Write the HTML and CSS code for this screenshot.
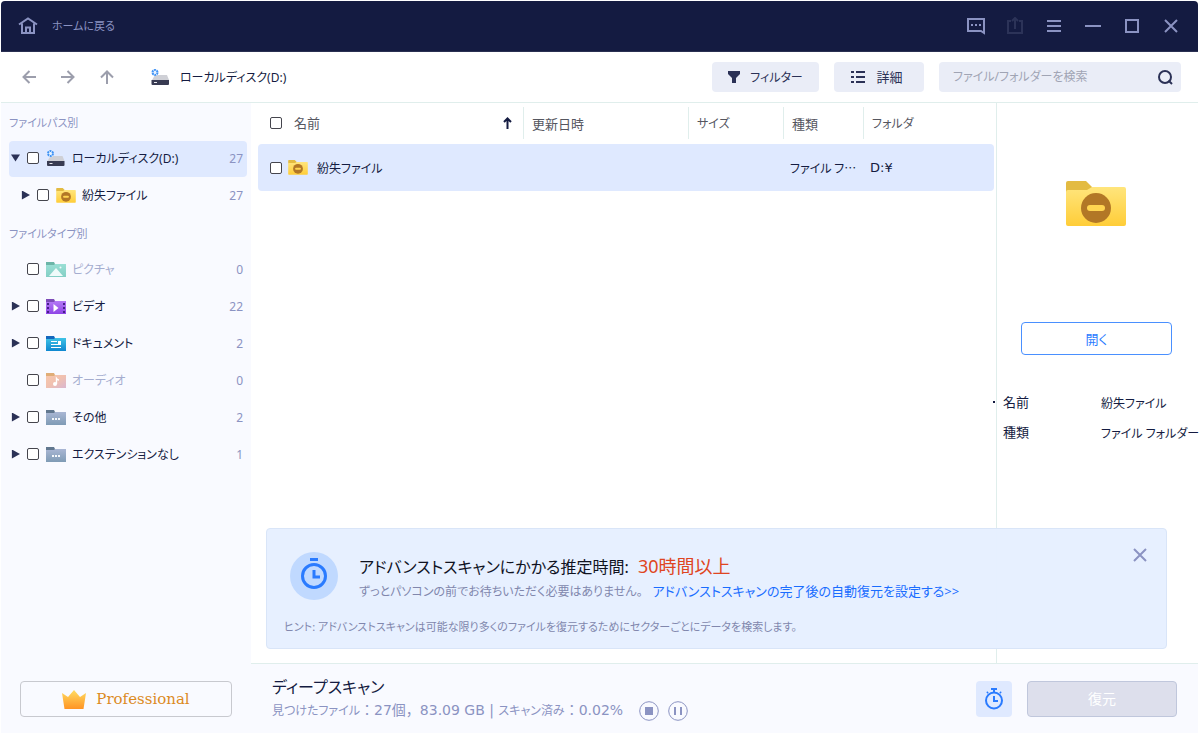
FILE: index.html
```html
<!DOCTYPE html>
<html lang="ja">
<head>
<meta charset="utf-8">
<title>ローカルディスク(D:)</title>
<link rel="stylesheet" href="styles.css">
</head>
<body>
<svg class="defs" width="0" height="0" aria-hidden="true">
  <defs>
    <linearGradient id="gYellow" x1="0" y1="0" x2="0" y2="1"><stop offset="0" stop-color="#ffe57c"/><stop offset="1" stop-color="#ffcd38"/></linearGradient>
    <linearGradient id="gCrown" x1="0" y1="0" x2="0" y2="1"><stop offset="0" stop-color="#ffdc62"/><stop offset="1" stop-color="#ff9424"/></linearGradient>
    <linearGradient id="gTeal" x1="0" y1="0" x2="0" y2="1"><stop offset="0" stop-color="#9adfd5"/><stop offset="1" stop-color="#84cfc5"/></linearGradient>
    <linearGradient id="gPurple" x1="0" y1="0" x2="0" y2="1"><stop offset="0" stop-color="#b47af5"/><stop offset="1" stop-color="#8f45e6"/></linearGradient>
    <linearGradient id="gBlue" x1="0" y1="0" x2="0" y2="1"><stop offset="0" stop-color="#3fc3e6"/><stop offset="1" stop-color="#0f87d0"/></linearGradient>
    <linearGradient id="gOrange" x1="0" y1="0" x2="1" y2="1"><stop offset="0" stop-color="#f8c8ac"/><stop offset=".5" stop-color="#f0c0b0"/><stop offset="1" stop-color="#d9b6d0"/></linearGradient>
    <linearGradient id="gGrey" x1="0" y1="0" x2="0" y2="1"><stop offset="0" stop-color="#a9b6d4"/><stop offset="1" stop-color="#7f9bb5"/></linearGradient>
  </defs>
  <symbol id="lost" viewBox="0 0 60 46">
    <path d="M0 2q0-2 2-2h18l6 6v5H0z" fill="#e3bb42"/>
    <path d="M0 11q0-2 2-2h19l5-3h32q2 0 2 2v35q0 2-2 2H2q-2 0-2-2z" fill="url(#gYellow)"/>
    <circle cx="30" cy="27" r="15" fill="#b27726"/><rect x="21" y="24" width="18" height="6" rx="3" fill="#ffd551"/>
  </symbol>
  <symbol id="picture" viewBox="0 0 20 15">
    <path d="M0 0h8l1 2v3H0z" fill="#6cb5a8"/><path d="M0 3h8l1-1h11v13H0z" fill="url(#gTeal)"/>
    <path d="M3 14l7-8 7 8z" fill="#effbfa"/><circle cx="14.5" cy="5.5" r="1" fill="#effbfa"/>
  </symbol>
  <symbol id="video" viewBox="0 0 20 15">
    <path d="M0 0h8l1 2v3H0z" fill="#7d4bb8"/><path d="M0 3h8l1-1h11v13H0z" fill="url(#gPurple)"/>
    <path d="M2 4v10M18 4v10" stroke="#47208a" stroke-width="2" stroke-dasharray="2 2"/><path d="M7.500 5l5 4-5 4z" fill="#fff"/>
  </symbol>
  <symbol id="document" viewBox="0 0 20 15">
    <path d="M0 0h8l1 2v3H0z" fill="#1467bd"/><path d="M0 3h8l1-1h11v13H0z" fill="url(#gBlue)"/>
    <path d="M5 5.500h6M5 8.500h10M5 11.500h10" stroke="#fff"/><path d="M12 5h3v3h-3z" fill="#fff"/>
  </symbol>
  <symbol id="audio" viewBox="0 0 20 15">
    <path d="M0 0h8l1 2v3H0z" fill="#e0ad77"/><path d="M0 3h8l1-1h11v13H0z" fill="url(#gOrange)"/>
    <path d="M10.500 11V5.500q1 1.500 2.500 1.500" stroke="#fff" stroke-width="1.400" fill="none"/><circle cx="9" cy="11" r="2" fill="#fff"/>
  </symbol>
  <symbol id="other" viewBox="0 0 20 15">
    <path d="M0 0h8l1 2v3H0z" fill="#61778f"/><path d="M0 3h8l1-1h11v13H0z" fill="url(#gGrey)"/>
    <path d="M6 8h2v2H6zM9 8h2v2H9zM12 8h2v2h-2z" fill="#f4f7fb"/>
  </symbol>
  <symbol id="disk" viewBox="0 0 19 17">
    <path d="M1 11L4 6h12l2 5z" fill="#cfd0d6"/><path d="M.5 11h17.500v4q0 1-1 1H1.500q-1 0-1-1z" fill="#383b52"/><path d="M3 13.500h3" stroke="#e9e9ee"/>
    <circle cx="4" cy="3.500" r="3.400" fill="#e8f3ff"/><circle cx="4" cy="3.500" r="2.500" fill="none" stroke="#3f92f5" stroke-width="2" stroke-dasharray="1.900 .718"/>
  </symbol>
</svg>

<div class="window">
  <header class="titlebar">
    <button class="home"><svg width="20" height="18" viewBox="0 0 20 18" fill="none" stroke="#8b93c2" stroke-width="2"><path d="M1 7.500L10 1.500l9 6M4 6.500V16h12V6.500"/><path d="M8 16v-5.500h4V16"/></svg><span>ホームに戻る</span></button>
    <div class="winbtns">
      <button aria-label="フィードバック"><svg width="18" height="18" viewBox="0 0 18 18" fill="none" stroke="#8b93c2" stroke-width="2"><path d="M1 2h16v14l-3-2H1z"/><path d="M4 8h2M8 8h2M12 8h2"/></svg></button>
      <button aria-label="共有" disabled><svg width="18" height="18" viewBox="0 0 18 18" fill="none" stroke="#2c3358" stroke-width="2"><path d="M5 4H2v12h14V4h-3M9 12V2"/><path d="M6 4l3-3 3 3" /></svg></button>
      <button aria-label="メニュー"><svg width="18" height="18" viewBox="0 0 18 18" stroke="#8b93c2" stroke-width="2"><path d="M2 4h14M2 9h14M2 14h14"/></svg></button>
      <button aria-label="最小化"><svg width="18" height="18" viewBox="0 0 18 18" stroke="#8b93c2" stroke-width="2"><path d="M1 9h16"/></svg></button>
      <button aria-label="最大化"><svg width="18" height="18" viewBox="0 0 18 18" fill="none" stroke="#8b93c2" stroke-width="2"><path d="M3 3h12v12H3z"/></svg></button>
      <button aria-label="閉じる"><svg width="18" height="18" viewBox="0 0 18 18" stroke="#8b93c2" stroke-width="2"><path d="M3 3l12 12M15 3L3 15"/></svg></button>
    </div>
  </header>

  <nav class="toolbar">
    <div class="history">
      <button aria-label="戻る"><svg width="14" height="14" viewBox="0 0 14 14"><path d="M14 7H2M7.500 1l-6 6 6 6"/></svg></button>
      <button aria-label="進む"><svg width="14" height="14" viewBox="0 0 14 14"><path d="M0 7h12M6.500 1l6 6-6 6"/></svg></button>
      <button aria-label="上へ"><svg width="14" height="14" viewBox="0 0 14 14"><path d="M7 14V2M1 7.500l6-6 6 6"/></svg></button>
    </div>
    <div class="location"><svg width="19" height="17"><use href="#disk"/></svg><span>ローカルディスク(D:)</span></div>
    <button class="tool filter"><svg width="12" height="12" viewBox="0 0 12 12" fill="#2b3156"><path d="M0 0h12v3L8 7v5H4V7L0 3z"/></svg><span>フィルター</span></button>
    <button class="tool detail"><svg width="14" height="12" viewBox="0 0 14 12" stroke="#2b3156" stroke-width="2"><path d="M0 1h3M5 1h9M0 6h3M5 6h9M0 11h3M5 11h9"/></svg><span>詳細</span></button>
    <form class="search"><input type="text" aria-label="検索" placeholder="ファイル/フォルダーを検索"><button type="button" aria-label="検索する"><svg width="15" height="15" viewBox="0 0 15 15" fill="none" stroke="#2b3156" stroke-width="2"><circle cx="7" cy="7" r="6"/><path d="M10.500 10.500l3.500 3.500"/></svg></button></form>
  </nav>

  <div class="body">
    <aside class="sidebar">
      <h2>ファイルパス別</h2>
      <ul>
        <li class="node selected"><i class="caret open"></i><input type="checkbox" id="n1"><svg class="disk" width="20" height="17"><use href="#disk"/></svg><label for="n1">ローカルディスク(D:)</label><span class="count">27</span></li>
        <li class="node child"><i class="caret"></i><input type="checkbox" id="n2"><svg width="20" height="15"><use href="#lost"/></svg><label for="n2">紛失ファイル</label><span class="count">27</span></li>
      </ul>
      <h2>ファイルタイプ別</h2>
      <ul>
        <li class="node empty"><i class="caret"></i><input type="checkbox" id="n3"><svg width="20" height="15"><use href="#picture"/></svg><label for="n3">ピクチャ</label><span class="count">0</span></li>
        <li class="node"><i class="caret"></i><input type="checkbox" id="n4"><svg width="20" height="15"><use href="#video"/></svg><label for="n4">ビデオ</label><span class="count">22</span></li>
        <li class="node"><i class="caret"></i><input type="checkbox" id="n5"><svg width="20" height="15"><use href="#document"/></svg><label for="n5">ドキュメント</label><span class="count">2</span></li>
        <li class="node empty"><i class="caret"></i><input type="checkbox" id="n6"><svg width="20" height="15"><use href="#audio"/></svg><label for="n6">オーディオ</label><span class="count">0</span></li>
        <li class="node"><i class="caret"></i><input type="checkbox" id="n7"><svg width="20" height="15"><use href="#other"/></svg><label for="n7">その他</label><span class="count">2</span></li>
        <li class="node"><i class="caret"></i><input type="checkbox" id="n8"><svg width="20" height="15"><use href="#other"/></svg><label for="n8">エクステンションなし</label><span class="count">1</span></li>
      </ul>
      <button class="pro"><svg width="24" height="19" viewBox="0 0 24 19"><path d="M0 3l6 4 6-7 6 7 6-4-2.500 16h-19z" fill="url(#gCrown)"/></svg>Professional</button>
    </aside>

    <div class="right">
      <div class="content">
        <main class="files">
          <table>
            <colgroup><col><col class="c-date"><col class="c-size"><col class="c-type"><col class="c-folder"></colgroup>
            <thead><tr>
              <th><div class="name head"><input type="checkbox" aria-label="すべて選択"><span>名前</span><svg class="sort" width="9" height="12" viewBox="0 0 9 12" fill="none" stroke="#141b41" stroke-width="2"><path d="M4.500 12V2M1 5l3.500-3.500L8 5"/></svg></div></th>
              <th><div class="head">更新日時</div></th><th><div class="head kana">サイズ</div></th><th><div class="head">種類</div></th><th><div class="head kana">フォルダ</div></th>
            </tr></thead>
            <tbody><tr>
              <td><div class="name"><input type="checkbox" id="f1"><svg width="20" height="15"><use href="#lost"/></svg><label for="f1">紛失ファイル</label></div></td>
              <td></td><td></td><td class="type">ファイル フ…</td><td class="path">D:¥</td>
            </tr></tbody>
          </table>
        </main>
        <aside class="preview">
          <svg width="60" height="46"><use href="#lost"/></svg>
          <button class="open-btn">開く</button>
          <dl><dt>名前</dt><dd>紛失ファイル</dd><dt>種類</dt><dd>ファイル フォルダー</dd></dl>
          <i class="grip"></i>
        </aside>
        <section class="toast">
          <div class="toast-top">
            <span class="clock"><svg width="28" height="32" viewBox="0 0 28 32" fill="none" stroke="#2a7bff" stroke-width="3"><circle cx="14" cy="18" r="11.500"/><path d="M10 1.500h8M14 12v7h6"/></svg></span>
            <div>
              <h1>アドバンストスキャンにかかる推定時間: <em>30時間以上</em></h1>
              <p>ずっとパソコンの前でお待ちいただく必要はありません。<a href="#">アドバンストスキャンの完了後の自動復元を設定する&gt;&gt;</a></p>
            </div>
            <button class="close" aria-label="閉じる"><svg width="14" height="14" viewBox="0 0 14 14" stroke="#8b93c2" stroke-width="2"><path d="M1 1l12 12M13 1L1 13"/></svg></button>
          </div>
          <p class="hint">ヒント: アドバンストスキャンは可能な限り多くのファイルを復元するためにセクターごとにデータを検索します。</p>
        </section>
      </div>
      <footer class="status">
        <div class="progress">
          <strong>ディープスキャン</strong>
          <div class="line"><span class="stats"><b>見つけたファイル</b>：27個，83.09 GB | <b>スキャン済み</b>：0.02%</span>
            <button aria-label="停止"><svg width="20" height="20" viewBox="0 0 20 20"><circle cx="10" cy="10" r="9.300" fill="none" stroke="#8b93c2"/><path d="M6 6h8v8H6z" fill="#8b93c2"/></svg></button>
            <button aria-label="一時停止"><svg width="20" height="20" viewBox="0 0 20 20"><circle cx="10" cy="10" r="9.300" fill="none" stroke="#8b93c2"/><path d="M6 6h2v8H6zM12 6h2v8h-2z" fill="#8b93c2"/></svg></button>
          </div>
        </div>
        <button class="timer" aria-label="自動復元"><svg width="20" height="22" viewBox="0 0 20 22" fill="none" stroke="#2a7bff" stroke-width="2"><circle cx="10" cy="12.500" r="8"/><path d="M7 1h6M10 1v3M10 8v5h4M4 4L3 5M16 4l1 1"/></svg></button>
        <button class="recover" disabled>復元</button>
      </footer>
    </div>
  </div>
</div>
</body>
</html>
```
FILE: styles.css
```css
* { box-sizing: border-box; }
body {
  margin: 0;
  background: #fff;
  color: #141b41;
  font: 13px/20px "Noto Sans", "Noto Sans CJK JP", sans-serif;
  font-feature-settings: "palt";
}
button, input { font: inherit; color: inherit; font-feature-settings: inherit; }
button { border: 0; padding: 0; background: none; cursor: pointer; }
svg { display: block; flex: none; }
.defs { position: absolute; }
h1, h2, p, ul, dl, dd { margin: 0; padding: 0; }
ul { list-style: none; }
span, label, th, td, dd, p { white-space: nowrap; }
label, dd, .kana { font-size: 12px; }
label, dd, .location span, .filter span { padding-top: 2px; }

input[type="checkbox"] {
  appearance: none;
  flex: none;
  width: 12px;
  height: 12px;
  margin: 0;
  border: 1px solid #45454d;
  border-radius: 2px;
  background: #fff;
}

.window {
  display: flex;
  flex-direction: column;
  min-height: 100vh;
  padding: 1px 2px 1px 1px;
}

.titlebar {
  display: flex;
  align-items: center;
  justify-content: space-between;
  height: 51px;
  padding: 0 18px 0 17px;
  border-bottom: 1px solid #2a3052;
  border-radius: 4px 4px 0 0;
  background: #141b41;
  color: #8b93c2;
}
.home { display: flex; align-items: center; gap: 14px; font-size: 11px; }
.winbtns { display: flex; gap: 21px; }

.toolbar {
  display: flex;
  align-items: center;
  height: 51px;
  padding: 0 17px 0 21px;
  border-bottom: 1px solid #e0eeec;
}
.history { display: flex; gap: 25px; }
.history svg { fill: none; stroke: #9c9eac; stroke-width: 2; }
.location { display: flex; align-items: center; gap: 10px; flex: 1; margin-left: 37px; font-size: 12px; }
.tool {
  display: flex;
  align-items: center;
  justify-content: center;
  height: 30px;
  border-radius: 4px;
  background: #eaedf7;
  color: #2b3156;
}
.filter { width: 107px; gap: 10px; margin-right: 15px; font-size: 12px; }
.detail { width: 90px; gap: 11px; margin-right: 15px; padding-right: 4px; }
.search {
  display: flex;
  align-items: center;
  width: 242px;
  height: 30px;
  padding: 0 8px 0 14px;
  border-radius: 4px;
  background: #eaedf7;
}
.search input { flex: 1; min-width: 0; padding: 0; border: 0; outline: 0; background: none; font-size: 12px; }
.search input::placeholder { color: #a0a4b4; }

.body { display: flex; flex: 1; }
.sidebar {
  display: flex;
  flex-direction: column;
  width: 250px;
  padding: 1px 4px 16px 8px;
  background: #f9faff;
}
.sidebar h2 { height: 37px; color: #8b93c2; font-size: 11px; font-weight: 400; line-height: 38px; }
.node {
  display: flex;
  align-items: center;
  height: 36px;
  margin-bottom: 1px;
  padding: 0 4px 2px 2px;
  border-radius: 4px;
}
.node.selected { background: #dfe9ff; }
.node.child { padding-left: 12px; }
.node input { margin: 0 7px; }
.node label { flex: 1; margin-left: 6px; }
.node.empty label { color: #a5adcf; }
.count { padding-top: 2px; color: #8b93c2; font-size: 12px; }
.caret { width: 9px; height: 9px; background: #2b3156; clip-path: polygon(10% 0, 100% 50%, 10% 100%); }
.caret.open { clip-path: polygon(0 10%, 100% 10%, 50% 90%); }
.empty .caret { visibility: hidden; }
.pro {
  display: flex;
  align-items: center;
  justify-content: center;
  gap: 10px;
  height: 36px;
  margin: auto 15px 0 11px;
  border: 1px solid #c8c9cf;
  border-radius: 4px;
  color: #dc8a1e;
  font: 15px "DejaVu Serif", serif;
}

.right { display: flex; flex-direction: column; flex: 1; min-width: 0; }
.content { position: relative; display: flex; flex: 1; }
.files { flex: 1; min-width: 0; padding: 0 2px 0 7px; }
table { width: 100%; table-layout: fixed; border-collapse: separate; border-spacing: 0; }
.c-date { width: 165px; }
.c-size { width: 95px; }
.c-type { width: 80px; }
.c-folder { width: 131px; }
th { padding: 4px 0 5px; color: #55565f; font-weight: 400; text-align: left; }
.head { height: 32px; padding-left: 8px; border-left: 1px solid #e0eeec; line-height: 34px; }
.name { display: flex; align-items: center; padding-left: 12px; }
.name.head { border: 0; padding-left: 12px; }
.name.head span { flex: 1; margin-left: 12px; }
.sort { margin-right: 11px; }
td { height: 47px; padding: 0 0 0 7px; background: #dfe9ff; }
td:first-child { padding: 0; border-radius: 4px 0 0 4px; }
td:last-child { border-radius: 0 4px 4px 0; }
.type { font-family: "Noto Sans CJK JP", sans-serif; font-size: 12px; }
.path { font-family: "DejaVu Sans", sans-serif; }
.name svg + label { margin-left: 9px; }
.name input + svg { margin-left: 6px; }

.preview {
  position: relative;
  display: flex;
  flex-direction: column;
  width: 202px;
  padding: 78px 6px 0;
  border-left: 1px solid #e0eeec;
}
.preview > svg { align-self: center; margin-right: 3px; }
.open-btn {
  height: 33px;
  margin: 95px 20px 0 18px;
  border: 1px solid #4a90ff;
  border-radius: 4px;
  color: #2a7bff;
}
.preview dl { display: grid; grid-template-columns: 98px 1fr; row-gap: 8px; margin-top: 37px; }
.grip { position: absolute; left: -4px; top: 298px; width: 2px; height: 2px; background: #141b41; }

.toast {
  position: absolute;
  left: 15px;
  right: 31px;
  bottom: 14px;
  padding: 23px 17px 11px;
  border: 1px solid #d9e5f8;
  border-radius: 4px;
  background: rgba(230, 240, 255, .97);
}
.toast-top { display: flex; align-items: flex-start; padding-left: 6px; }
.clock {
  display: flex;
  align-items: center;
  justify-content: center;
  width: 48px;
  height: 48px;
  margin-right: 21px;
  padding-bottom: 4px;
  border-radius: 50%;
  background: #c0d9ff;
}
.toast h1 { color: #10131f; font-size: 16px; font-weight: 400; line-height: 28px; }
.toast em { margin-left: 5px; color: #df4522; font-size: 18px; font-style: normal; }
.toast p { color: #8187ad; font-size: 12px; line-height: 20px; }
.toast a { margin-left: 10px; color: #1a6dff; font-size: 13px; text-decoration: none; }
.close { margin: -4px 2px 0 auto; }
.toast .hint { margin-top: 15px; font-size: 11px; }

.status {
  display: flex;
  align-items: center;
  height: 70px;
  padding: 0 21px;
  border-top: 1px solid #e0eeec;
  background: #f9faff;
}
.progress { flex: 1; }
.progress strong { display: block; font-size: 16px; font-weight: 400; line-height: 24px; }
.line { display: flex; align-items: center; gap: 9px; height: 24px; color: #8b93c2; }
.stats {
  margin-right: 7px;
  font-family: "DejaVu Sans", "Noto Sans CJK JP", sans-serif;
  font-size: 14px;
  font-feature-settings: normal;
}
.stats b { font-size: 12px; font-weight: 400; font-feature-settings: "palt"; }
.timer {
  display: flex;
  align-items: center;
  justify-content: center;
  width: 36px;
  height: 36px;
  margin-right: 15px;
  border-radius: 4px;
  background: #dfe9ff;
}
.recover {
  width: 150px;
  height: 36px;
  border: 1px solid #c0c7dc;
  border-radius: 4px;
  background: #dddfec;
  color: #fff;
  font-size: 14px;
}
```
